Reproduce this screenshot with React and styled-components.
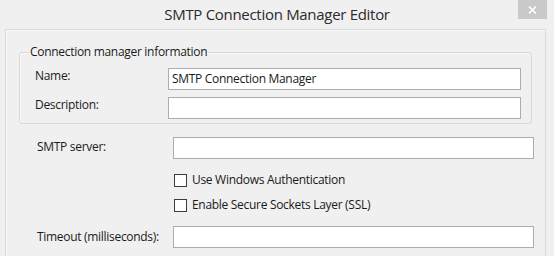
import React from "react";
import styled, { createGlobalStyle } from "styled-components";

const GlobalStyle = createGlobalStyle`
  html, body {
    margin: 0;
    padding: 0;
  }
  body {
    background: #f0f0f0;
    font-family: "Open Sans", "Noto Sans", sans-serif;
    color: #1a1a1a;
  }
`;

const Window = styled.div`
  width: 554px;
  height: 256px;
  overflow: hidden;
  background: #f0f0f0;
  display: flex;
  flex-direction: column;
`;

const TitleBar = styled.div`
  display: grid;
  grid-template-columns: 1fr auto 1fr;
  align-items: start;
  height: 29px;
  flex-shrink: 0;
`;

const Title = styled.h1`
  grid-column: 2;
  margin: 0;
  padding-top: 3px;
  font-size: 15px;
  font-weight: 400;
  letter-spacing: -0.3px;
  line-height: 22px;
  color: #2b2b2b;
  white-space: nowrap;
`;

const CloseButton = styled.div`
  grid-column: 3;
  justify-self: end;
  margin-right: 7px;
  width: 29px;
  height: 19px;
  background: #c9c9c9;
  display: flex;
  align-items: center;
  justify-content: center;
`;

const Panel = styled.div`
  flex: 1;
  margin: 0 8px 0 5px;
  border: 1px solid #dadada;
  border-bottom: none;
  box-shadow: inset 1px 1px 0 #fafafa;
  padding: 14px 11px 0 13px;
`;

const GroupBox = styled.fieldset`
  margin: 0 2px 0 0;
  border: 1px solid #d8d8d8;
  border-radius: 3px;
  box-shadow: inset 1px 1px 0 #fafafa;
  padding: 2px 10px 4px 15px;
`;

const Legend = styled.legend`
  margin-left: -6px;
  padding: 0 1px;
  font-size: 12px;
  letter-spacing: -0.3px;
  line-height: 16px;
`;

const FieldRow = styled.div`
  display: grid;
  grid-template-columns: ${(p) => p.$labelWidth}px 1fr;
  align-items: start;
  margin-top: ${(p) => p.$gap || 0}px;
`;

const Label = styled.label`
  font-size: 12px;
  letter-spacing: -0.3px;
  line-height: 16px;
  padding-top: ${(p) => p.$offset || 0}px;
  white-space: nowrap;
`;

const TextBox = styled.div`
  height: 20px;
  background: #fff;
  border: 1px solid #abadb3;
  font-size: 12px;
  letter-spacing: -0.3px;
  line-height: 20px;
  padding-left: 3px;
  white-space: nowrap;
`;

const Form = styled.div`
  padding: 13px 0 0 18px;
`;

const CheckRow = styled.div`
  display: flex;
  align-items: center;
  gap: 5px;
  margin-left: ${(p) => p.$indent}px;
  margin-top: ${(p) => p.$gap}px;
  height: 18px;
`;

const Box = styled.span`
  width: 11px;
  height: 11px;
  background: #fff;
  border: 1px solid #3c3c3c;
  flex-shrink: 0;
`;

const CheckText = styled.span`
  font-size: 12px;
  letter-spacing: -0.3px;
  line-height: 16px;
`;

export default function App() {
  return (
    <Window>
      <GlobalStyle />
      <TitleBar>
        <Title>SMTP Connection Manager Editor</Title>
        <CloseButton>
          <svg width="9" height="8" viewBox="0 0 9 8">
            <path d="M1 0.5 L8 7.5 M8 0.5 L1 7.5" stroke="#fff" strokeWidth="1.6" />
          </svg>
        </CloseButton>
      </TitleBar>
      <Panel>
        <GroupBox>
          <Legend>Connection manager information</Legend>
          <FieldRow $labelWidth={133} $gap={6}>
            <Label $offset={0}>Name:</Label>
            <TextBox>SMTP Connection Manager</TextBox>
          </FieldRow>
          <FieldRow $labelWidth={133} $gap={7}>
            <Label $offset={0}>Description:</Label>
            <TextBox />
          </FieldRow>
        </GroupBox>
        <Form>
          <FieldRow $labelWidth={136}>
            <Label $offset={2}>SMTP server:</Label>
            <TextBox />
          </FieldRow>
          <CheckRow $indent={137} $gap={12}>
            <Box />
            <CheckText>Use Windows Authentication</CheckText>
          </CheckRow>
          <CheckRow $indent={137} $gap={7}>
            <Box />
            <CheckText>Enable Secure Sockets Layer (SSL)</CheckText>
          </CheckRow>
          <FieldRow $labelWidth={136} $gap={12}>
            <Label $offset={3}>Timeout (milliseconds):</Label>
            <TextBox />
          </FieldRow>
        </Form>
      </Panel>
    </Window>
  );
}
